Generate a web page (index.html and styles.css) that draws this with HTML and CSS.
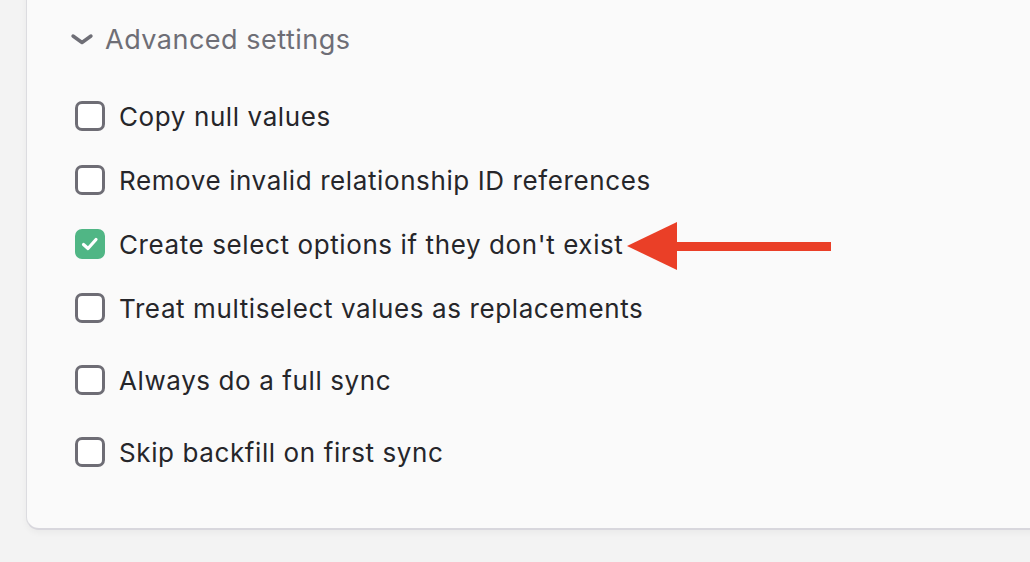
FILE: index.html
```html
<!DOCTYPE html>
<html>
<head>
<meta charset="utf-8">
<link rel="stylesheet" href="styles.css">
</head>
<body>
<div class="page">
  <section class="card">
    <div class="heading">
      <svg class="chevron" width="24" height="14" viewBox="0 0 24 14"><path d="M3 4 L12 10.5 L21 4" fill="none" stroke="#6e6e76" stroke-width="3.4" stroke-linecap="round" stroke-linejoin="round"/></svg>
      <span class="heading-text">Advanced settings</span>
    </div>
    <div class="options">
      <label class="option"><span class="box"></span><span class="label">Copy null values</span></label>
      <label class="option"><span class="box"></span><span class="label">Remove invalid relationship ID references</span></label>
      <label class="option annotated"><span class="box checked"><svg width="20" height="20" viewBox="0 0 20 20"><path d="M3.5 10.5 L8 14.5 L16 5.5" fill="none" stroke="#fff" stroke-width="3.2" stroke-linecap="round" stroke-linejoin="round"/></svg></span><span class="label">Create select options if they don't exist</span>
        <svg class="arrow" width="206" height="50" viewBox="0 0 206 50"><polygon points="0,24 50,0 50,48" fill="#ea3f27"/><rect x="48" y="20" width="156" height="9" fill="#ea3f27"/></svg>
      </label>
      <label class="option"><span class="box"></span><span class="label">Treat multiselect values as replacements</span></label>
      <label class="option spaced"><span class="box"></span><span class="label">Always do a full sync</span></label>
      <label class="option spaced"><span class="box"></span><span class="label">Skip backfill on first sync</span></label>
    </div>
  </section>
</div>
</body>
</html>
```

FILE: styles.css
```css
html, body {
  margin: 0;
  padding: 0;
  background: #f3f3f3;
  height: 562px;
  overflow: hidden;
  font-family: Inter, "Noto Sans", "Liberation Sans", sans-serif;
}
.page {
  padding: 0;
}
.card {
  margin: -20px -40px 0 26px;
  padding: 42px 0 60px 43px;
  background: #fafafa;
  border: 1px solid #dcdce0;
  border-bottom: 2px solid #d8d7dd;
  border-radius: 0 0 0 13px;
  box-shadow: 0 3px 6px rgba(0,0,0,0.04);
}
.heading {
  display: flex;
  align-items: center;
  height: 32px;
}
.chevron {
  margin-right: 11px;
}
.heading-text {
  font-size: 27px;
  color: #6e6e76;
  letter-spacing: 0.5px;
}
.options {
  display: flex;
  flex-direction: column;
  gap: 32px;
  margin-top: 45px;
  padding-left: 5px;
}
.option {
  position: relative;
  display: flex;
  align-items: center;
  height: 32px;
  gap: 14px;
}
.option.spaced {
  margin-top: 8px;
}
.box {
  width: 24px;
  height: 24px;
  border: 3.5px solid #6e6d75;
  border-radius: 7px;
  background: #fff;
  display: flex;
  align-items: center;
  justify-content: center;
  flex: none;
}
.box.checked {
  background: #50b685;
  border-color: #50b685;
}
.label {
  font-size: 26px;
  color: #26262a;
  letter-spacing: 0.6px;
}
.arrow {
  position: absolute;
  left: 552px;
  top: -6px;
}
```
